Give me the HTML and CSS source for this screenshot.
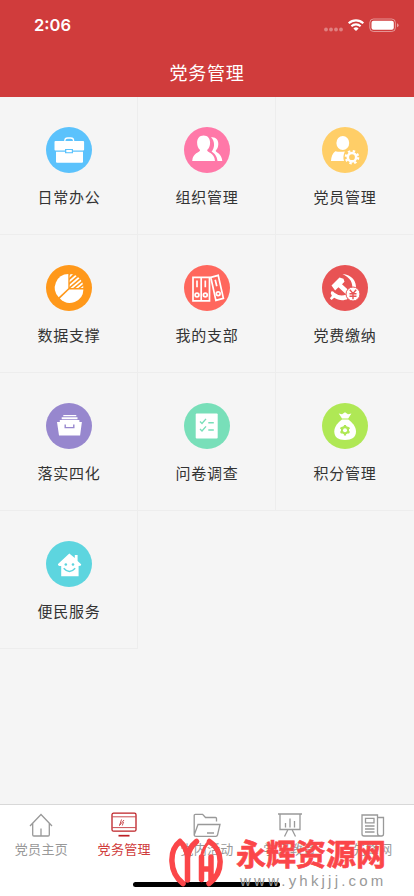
FILE: index.html
```html
<!DOCTYPE html>
<html lang="zh-CN">
<head>
  <meta charset="UTF-8">
  <meta name="viewport" content="width=device-width, initial-scale=1.0">
  <title>党务管理</title>
  <link rel="stylesheet" href="styles.css">
</head>
<body>
  <header class="header">
    <div class="status-bar">
      <span class="time">2:06</span>
      <svg class="status-icons" width="76" height="16" viewBox="0 0 76 16">
        <g fill="#fff" fill-opacity=".35">
          <circle cx="3" cy="11.5" r="1.9"/><circle cx="8" cy="11.5" r="1.9"/><circle cx="13" cy="11.5" r="1.9"/><circle cx="18" cy="11.5" r="1.9"/>
        </g>
        <g fill="none" stroke="#fff" stroke-width="2.1">
          <path d="M25.7 5.3a10.5 10.5 0 0 1 14.6 0"/>
          <path d="M28.4 8.2a6.7 6.7 0 0 1 9.2 0"/>
        </g>
        <path d="M30.4 10.4a3.9 3.9 0 0 1 5.2 0L33 13z" fill="#fff"/>
        <rect x="46.8" y="1" width="25.6" height="12.5" rx="3.7" fill="none" stroke="#fff" stroke-opacity=".45"/>
        <rect x="48.5" y="2.7" width="22.3" height="9" rx="2" fill="#fff"/>
        <path d="M74 5.2q1.6.6 1.6 2t-1.6 2z" fill="#fff" fill-opacity=".5"/>
      </svg>
    </div>
    <h1 class="title">党务管理</h1>
  </header>

  <main class="grid">
    <a class="cell">
      <svg class="icon blue" viewBox="0 0 46 46">
        <path d="M18.800 14.500v-.7q0-2.800 2.800-2.800h3.200q2.800 0 2.800 2.800v.7" fill="none" stroke="#fff" stroke-width="1.3"/>
        <path d="M9.500 14h27.600q1 0 1 1v7.500q0 1-1 1H27v-1.500h-8v1.500H9.500q-1 0-1-1V15q0-1 1-1z"/>
        <path d="M10 24.700h9v1.500h8v-1.500h10v10q0 1-1 1H11q-1 0-1-1z"/>
        <rect x="20.300" y="23" width="5.500" height="2.200"/>
      </svg>
      <span class="label">日常办公</span>
    </a>
    <a class="cell">
      <svg class="icon pink" viewBox="0 0 46 46">
        <path d="M27 10.300c4.600-.8 7.500 2.300 7.300 7-.1 2.800-1 4.800-2.600 6.400.1 2 5.800 2.200 6.600 10.300h-4.800c-.8-5.600-3.400-7.700-5.900-9.200 3.400-4.300 3.400-10.500-.6-14.500z"/>
        <path d="M19.600 8.500c4 0 6.500 2.800 6.500 7.200 0 3.400-1.200 5.800-3 7.400.2 2.800 7.200 2.300 7.900 10.900H8.200c.7-8.500 7.600-8.100 7.900-10.900-1.800-1.600-3-4-3-7.400 0-4.400 2.500-7.200 6.500-7.200z"/>
      </svg>
      <span class="label">组织管理</span>
    </a>
    <a class="cell">
      <svg class="icon yellow" viewBox="0 0 46 46">
        <ellipse cx="20.800" cy="16" rx="6.400" ry="6.900"/>
        <path d="M13.300 24.200q4.500 1.200 9.500.2c-1.400 3.400-1.900 6.200-.8 9.700H9c.2-4.500 1.600-8 4.300-9.900z"/>
        <circle cx="30" cy="30.200" r="4.200" fill="none" stroke="#fff" stroke-width="2.600"/>
        <circle cx="30" cy="30.200" r="6.200" fill="none" stroke="#fff" stroke-width="2.200" stroke-dasharray="2.4 2.47"/>
      </svg>
      <span class="label">党员管理</span>
    </a>
    <a class="cell">
      <svg class="icon orange" viewBox="0 0 46 46">
        <path d="M22.300 9v14.200l-9.600 9A13.700 13.700 0 0 1 22.300 9z"/>
        <path d="M23.200 24.500h14.200a13.600 13.600 0 0 1-23.500 9z"/>
        <clipPath id="slice"><path d="M23.700 9a14 14 0 0 1 13.700 14H23.700z"/></clipPath>
        <path clip-path="url(#slice)" d="M20 15l9-9M20 19.300L33 8M20 23.600L36 10M23 25.300L38 13M28 25.400l11-9M33 25.400l6-5" fill="none" stroke="#fff" stroke-width="1.700"/>
      </svg>
      <span class="label">数据支撑</span>
    </a>
    <a class="cell">
      <svg class="icon coral" viewBox="0 0 46 46">
        <g fill="none" stroke="#fff" stroke-width="1.700">
          <path d="M9 12.300h16.500v23.500H9zM17.200 12v24"/>
          <path d="M26.800 12.400l7.400-2 5.200 23-7.500 2z"/>
          <path d="M13 15.500v6.700M21.300 15.500v6.700M31.200 14.800l1.600 6.500"/>
          <circle cx="13" cy="30" r="1.900"/><circle cx="21.300" cy="30" r="1.900"/><circle cx="34.200" cy="28.800" r="1.900"/>
        </g>
      </svg>
      <span class="label">我的支部</span>
    </a>
    <a class="cell">
      <svg class="icon red" viewBox="0 0 46 46">
        <path d="M20.500 9C29.500 9.500 35 16 34 25l-4 .4C31.500 17.500 28 12.500 20.500 9z"/>
        <path d="M9.500 20.500L17.500 12.500l4 1.200 1 3-2.500 2.500 9.300 8.600-3.200 3.500-9.600-9-3.400 3.200z"/>
        <path d="M9.200 26.500q2.200-.8 3.200 1.300 5.400 4.300 12 1.700l1.600 4.300c-4.600 2.400-9.600 1.700-13.800-1l-2.700 2.300-1.600-1.800 2-2.500q-1.900-2.500-.7-4.300z"/>
        <circle cx="31" cy="29" r="7" class="ring"/>
        <path d="M27.800 24.800l3.200 3.700 3.200-3.700M31 28.500v5.700M27.500 28.700h7M27.500 31.200h7" class="cut"/>
      </svg>
      <span class="label">党费缴纳</span>
    </a>
    <a class="cell">
      <svg class="icon purple" viewBox="0 0 46 46">
        <path d="M17.300 12h13v1.300h-13zM15.700 14.300h15.800v1.900H15.700z"/>
        <path d="M13.800 17h19.600v2h2.500l-1.800 13.400H13L11 19h2.800z"/>
        <path d="M19.200 21.500v3.100h8.600v-3.100" class="cut"/>
      </svg>
      <span class="label">落实四化</span>
    </a>
    <a class="cell">
      <svg class="icon green" viewBox="0 0 46 46">
        <rect x="11.700" y="10.400" width="22" height="25" rx="1"/>
        <path d="M16 18.500l2 2 4-4.600M16 26l2 2 4-4.600M24.300 19.800h5.500M24.300 27h5.500" class="cut"/>
      </svg>
      <span class="label">问卷调查</span>
    </a>
    <a class="cell">
      <svg class="icon lime" viewBox="0 0 46 46">
        <path d="M16.700 10.500l3.300.8 3-2 3 2 3.400-.8-3.200 5H20z"/>
        <path d="M20 16.500h6.300c4.200 3.200 7.700 7.100 7.700 12 0 5.800-4.300 8.500-11 8.500s-10.700-2.700-10.700-8.500c0-4.900 3.500-8.800 7.700-12z"/>
        <circle cx="23" cy="27.200" r="3" class="cut gear"/>
        <path d="M23 22v10.400M18.500 24.600l9 5.200M18.500 29.800l9-5.200" class="cut gear"/>
        <circle cx="23" cy="27.200" r="2"/>
      </svg>
      <span class="label">积分管理</span>
    </a>
    <a class="cell">
      <svg class="icon cyan" viewBox="0 0 46 46">
        <path d="M23.300 12.500l5.500 4.600v-3h2.800V20l3.500 3.300q.5 1.800-2.500 1.700v10.300H15.200V25q-3.500.2-3.200-2z"/>
        <circle cx="19.800" cy="23.500" r="1.300" class="dot"/><circle cx="27" cy="23.500" r="1.300" class="dot"/>
        <path d="M17.700 27.300q5.700 6.500 11.500 0" class="cut"/>
      </svg>
      <span class="label">便民服务</span>
    </a>
  </main>

  <nav class="tabbar">
    <a class="tab">
      <svg class="tab-icon" viewBox="0 0 28 26">
        <path d="M3 14L14 2.500 25 14M5.700 11.500v11.300q0 1.200 1.200 1.200h14.200q1.200 0 1.200-1.200V11.500M14 16.500V24"/>
      </svg>
      <span>党员主页</span>
    </a>
    <a class="tab active">
      <svg class="tab-icon" viewBox="0 0 28 26">
        <rect x="2" y="1.200" width="24" height="18" rx="1.500"/>
        <path d="M2.500 4.800h23M2.500 15.600h23" stroke-width=".8"/>
        <path d="M11.500 7.500l-2 6M14 8l-4.500 5.500M13.500 10l-1.200 3.500" stroke-width=".8"/>
        <path d="M8.500 23.700h11" stroke-width="1.700"/>
      </svg>
      <span>党务管理</span>
    </a>
    <a class="tab">
      <svg class="tab-icon" viewBox="0 0 28 26">
        <path d="M1.200 23V3.500Q1.200 2.300 2.400 2.300h7.200l2.900 3.200h10q1 0 1 1v3M1.200 23L5 12.500h22L24.500 23q-.3 1.300-1.600 1.300H3Q1.200 24.300 1.200 23zM14 21h7"/>
      </svg>
      <span>党内活动</span>
    </a>
    <a class="tab">
      <svg class="tab-icon" viewBox="0 0 28 26">
        <path d="M2 2h24M4 2v15.500h20V2M9.500 11v4.500M14 6.500v9M18.500 9v6.500M12 17.500l-3.500 7M16 17.500l3.500 7"/>
      </svg>
      <span>学习教育</span>
    </a>
    <a class="tab">
      <svg class="tab-icon" viewBox="0 0 28 26">
        <path d="M3 3h15.500v18q0 3 2.500 3H5q-2 0-2-2zM18.500 5.500h6V22q0 2-2 2H20M6.500 6.300h8.500v4.500H6.500zM6 14h9.500M6 17h9.500M6 20h9.500"/>
      </svg>
      <span>先锋网</span>
    </a>
    <div class="home-indicator"></div>
    <div class="watermark">
      <svg class="watermark-logo" width="56" height="50" viewBox="0 0 56 50">
        <path d="M12 3.500C1 12 .5 34 15 45.500M12 3.500q6 5 7.500 15V42M28.500 3.500Q20.500 10 19.500 20M33.500 19v22.500M33.500 31h9.500M43 19v22.500M41.500 3.500C55 12 56.500 34 41 45.500"/>
        <path d="M41.500 3.500Q35 9 33.500 19" stroke-width="3"/>
      </svg>
      <div class="watermark-text">
        <strong>永辉资源网</strong>
        <span>www.yhkjjj.com</span>
      </div>
    </div>
  </nav>
</body>
</html>
```

FILE: styles.css
```css
* {
  box-sizing: border-box;
}

body {
  margin: 0;
  min-height: 100vh;
  display: flex;
  flex-direction: column;
  background: #f5f5f5;
  color: #333;
  font-family: "Liberation Sans", "Noto Sans CJK SC", sans-serif;
}

.header {
  height: 97px;
  background: #d03c3c;
  color: #fff;
}

.status-bar {
  display: flex;
  justify-content: space-between;
  height: 50px;
  padding: 18px 14px 0 34px;
}

.time {
  font: 600 16.5px/15px Inter, sans-serif;
}

.status-icons {
  margin-right: 1px;
}

.title {
  margin: 0;
  font-size: 18px;
  font-weight: 400;
  line-height: 48px;
  letter-spacing: 0.7px;
  text-align: center;
}

.grid {
  flex: 1;
  display: grid;
  grid-template-columns: repeat(3, 138px);
  grid-auto-rows: 138px;
  align-content: start;
}

.cell {
  display: flex;
  flex-direction: column;
  align-items: center;
  padding-top: 30px;
  border-right: 1px solid #ededed;
  border-bottom: 1px solid #ededed;
}

.cell:nth-child(3n) {
  border-right-color: transparent;
}

.icon {
  width: 46px;
  height: 46px;
  margin-left: 1px;
  border-radius: 50%;
  fill: #fff;
  background: var(--c);
}

.blue { --c: #5bc2fc; }
.pink { --c: #ff78a8; }
.yellow { --c: #ffce67; }
.orange { --c: #ff981a; }
.coral { --c: #ff675d; }
.red { --c: #e85354; }
.purple { --c: #9787ce; }
.green { --c: #78dfb9; }
.lime { --c: #afe855; }
.cyan { --c: #5dd5df; }

.cut {
  fill: none;
  stroke: var(--c);
  stroke-width: 1.4;
}

.gear {
  stroke-width: 2.2;
}

.ring {
  stroke: var(--c);
  stroke-width: 1;
}

.dot {
  fill: var(--c);
}

.label {
  margin-top: 14px;
  font-size: 15px;
  line-height: 22px;
  letter-spacing: 0.8px;
  padding-left: 1px;
}

.tabbar {
  position: relative;
  display: flex;
  height: 92px;
  background: #fff;
  border-top: 1px solid #d8d8d8;
}

.tab {
  flex: 1;
  display: flex;
  flex-direction: column;
  align-items: center;
  padding-top: 7px;
  color: #999;
  font-size: 13px;
  line-height: 18px;
  letter-spacing: 0.3px;
}

.tab-icon {
  width: 28px;
  height: 26px;
  margin-bottom: 3px;
  fill: none;
  stroke: currentColor;
  stroke-width: 1.3;
}

.active {
  color: #d03c3c;
}

.active .tab-icon {
  stroke: #bd2025;
}

.home-indicator {
  position: absolute;
  left: 133px;
  bottom: 9px;
  width: 147px;
  height: 5px;
  border-radius: 3px;
  background: #000;
}

/* site mark sits over the tab bar */
.watermark {
  position: absolute;
  left: 168px;
  top: 32px;
  display: flex;
  gap: 12px;
}

.watermark-logo {
  fill: none;
  stroke: #fb4649;
  stroke-width: 5.5;
  stroke-linecap: round;
  margin-top: 1px;
}

.watermark-text {
  display: flex;
  flex-direction: column;
  white-space: nowrap;
}

.watermark-text strong {
  color: #fb4649;
  font-size: 30px;
  font-weight: 700;
  line-height: 36px;
  -webkit-text-stroke: 0.6px #fb4649;
}

.watermark-text span {
  margin-left: 4px;
  color: #999;
  font-size: 15px;
  line-height: 16px;
  letter-spacing: 3.2px;
}
```
